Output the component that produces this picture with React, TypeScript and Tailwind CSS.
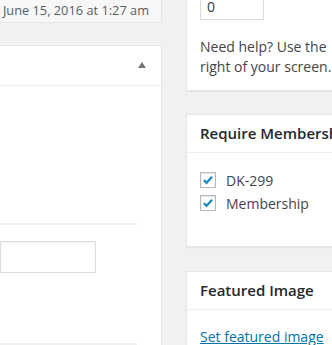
import React from "react";

function Checkbox() {
  return (
    <span className="w-[16px] h-[16px] shrink-0 bg-white border border-[#b4b9be] shadow-[inset_0_1px_2px_rgba(0,0,0,0.1)] flex items-center justify-center">
      <svg viewBox="0 0 16 16" className="w-[16px] h-[16px]">
        <path d="M3.2 8.2 L6.4 11.2 L12.6 4.4" fill="none" stroke="#1e8cbe" strokeWidth="2.6" strokeLinecap="butt" strokeLinejoin="miter" />
      </svg>
    </span>
  );
}

function Postbox({ title, children, className = "" }: { title: string; children: React.ReactNode; className?: string }) {
  return (
    <div className={`shrink-0 bg-white border border-r-0 border-[#e5e5e5] shadow-[0_1px_1px_rgba(0,0,0,0.04)] ${className}`}>
      <div className="h-[38px] border-b border-[#eee] flex items-center pl-[13px] text-[15px] font-semibold text-[#23282d] whitespace-nowrap overflow-hidden">
        {title}
      </div>
      {children}
    </div>
  );
}

export default function App() {
  return (
    <div className="w-[332px] h-[345px] overflow-hidden bg-[#f1f1f1] flex gap-[24px] font-['Open_Sans',sans-serif] text-[14px] text-[#444]">
      {/* main column */}
      <div className="w-[162px] shrink-0 flex flex-col">
        <div className="h-[23px] shrink-0 bg-[#f7f7f7] border-b border-r border-[#e5e5e5] flex items-center justify-end pr-[12px] text-[12.8px] text-[#555d66] whitespace-nowrap overflow-hidden">
          June 15, 2016 at 1:27 am
        </div>
        <div className="mt-[22px] flex-1 bg-white border-t border-r border-[#e5e5e5] flex flex-col">
          <div className="h-[40px] shrink-0 border-b border-[#eee] flex items-center justify-end pr-[15px]">
            <svg viewBox="0 0 8 6" className="w-[8px] h-[6px] mt-[-2px]">
              <path d="M0 6 L4 0 L8 6 Z" fill="#72777c" />
            </svg>
          </div>
          <div className="h-[137px] shrink-0" />
          <div className="w-[137px] h-[2px] shrink-0 bg-[#efefef]" />
          <div className="mt-[16px] w-[96px] h-[32px] shrink-0 border border-[#ddd] shadow-[inset_0_1px_2px_rgba(0,0,0,0.07)]" />
          <div className="mt-[70px] w-[137px] h-[2px] shrink-0 bg-[#efefef]" />
        </div>
      </div>

      {/* sidebar */}
      <div className="w-[280px] shrink-0 flex flex-col">
        <div className="h-[91px] shrink-0 bg-white border-b border-l border-[#e5e5e5] shadow-[0_1px_1px_rgba(0,0,0,0.04)] pl-[13px] overflow-hidden">
          <div className="mt-[-8px] w-[64px] h-[28px] border border-[#ddd] shadow-[inset_0_1px_2px_rgba(0,0,0,0.07)] flex items-end pb-[2px] pl-[6px] text-[#32373c]">
            0
          </div>
          <p className="mt-[17px] leading-[20px] whitespace-nowrap">
            Need help? Use the
            <br />
            right of your screen.
          </p>
        </div>

        <Postbox title="Require Membership" className="mt-[23px] h-[133px]">
          <div className="pt-[19px] pl-[13px] flex flex-col gap-[7px]">
            <label className="flex items-center gap-[10px] h-[16px]">
              <Checkbox />
              <span>DK-299</span>
            </label>
            <label className="flex items-center gap-[10px] h-[16px]">
              <Checkbox />
              <span>Membership</span>
            </label>
          </div>
        </Postbox>

        <Postbox title="Featured Image" className="mt-[24px] h-[90px]">
          <div className="pt-[16px] pl-[13px]">
            <a href="#" className="text-[#0073aa] underline">
              Set featured image
            </a>
          </div>
        </Postbox>
      </div>
    </div>
  );
}
